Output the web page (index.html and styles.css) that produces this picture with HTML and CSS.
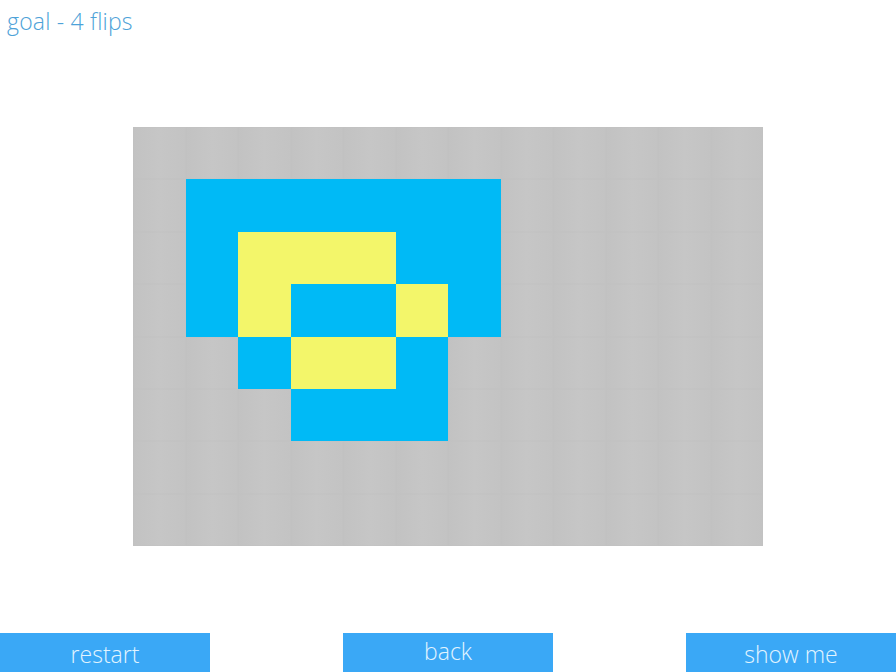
FILE: index.html
```html
<!DOCTYPE html>
<html>
<head>
<meta charset="utf-8">
<link rel="stylesheet" href="styles.css">
</head>
<body>
<div class="page">
  <div class="title">goal - 4 flips</div>
  <div class="board-wrap">
    <div class="board">
      <div class="c g"></div><div class="c g"></div><div class="c g"></div><div class="c g"></div><div class="c g"></div><div class="c g"></div><div class="c g"></div><div class="c g"></div><div class="c g"></div><div class="c g"></div><div class="c g"></div><div class="c g"></div>
      <div class="c g"></div><div class="c b"></div><div class="c b"></div><div class="c b"></div><div class="c b"></div><div class="c b"></div><div class="c b"></div><div class="c g"></div><div class="c g"></div><div class="c g"></div><div class="c g"></div><div class="c g"></div>
      <div class="c g"></div><div class="c b"></div><div class="c y"></div><div class="c y"></div><div class="c y"></div><div class="c b"></div><div class="c b"></div><div class="c g"></div><div class="c g"></div><div class="c g"></div><div class="c g"></div><div class="c g"></div>
      <div class="c g"></div><div class="c b"></div><div class="c y"></div><div class="c b"></div><div class="c b"></div><div class="c y"></div><div class="c b"></div><div class="c g"></div><div class="c g"></div><div class="c g"></div><div class="c g"></div><div class="c g"></div>
      <div class="c g"></div><div class="c g"></div><div class="c b"></div><div class="c y"></div><div class="c y"></div><div class="c b"></div><div class="c g"></div><div class="c g"></div><div class="c g"></div><div class="c g"></div><div class="c g"></div><div class="c g"></div>
      <div class="c g"></div><div class="c g"></div><div class="c g"></div><div class="c b"></div><div class="c b"></div><div class="c b"></div><div class="c g"></div><div class="c g"></div><div class="c g"></div><div class="c g"></div><div class="c g"></div><div class="c g"></div>
      <div class="c g"></div><div class="c g"></div><div class="c g"></div><div class="c g"></div><div class="c g"></div><div class="c g"></div><div class="c g"></div><div class="c g"></div><div class="c g"></div><div class="c g"></div><div class="c g"></div><div class="c g"></div>
      <div class="c g"></div><div class="c g"></div><div class="c g"></div><div class="c g"></div><div class="c g"></div><div class="c g"></div><div class="c g"></div><div class="c g"></div><div class="c g"></div><div class="c g"></div><div class="c g"></div><div class="c g"></div>
    </div>
  </div>
  <div class="buttons">
    <div class="btn restart">restart</div>
    <div class="btn back">back</div>
    <div class="btn show">show me</div>
  </div>
</div>
</body>
</html>
```
FILE: styles.css
```css
html, body {
  margin: 0;
  padding: 0;
  background: #ffffff;
}
.page {
  width: 896px;
  height: 672px;
  display: flex;
  flex-direction: column;
  font-family: "Open Sans", "DejaVu Sans", sans-serif;
}
.title {
  color: #4da2d8;
  font-size: 23px;
  font-weight: 300;
  line-height: 30px;
  padding: 6px 0 0 7px;
  height: 36px;
  box-sizing: border-box;
  letter-spacing: 0.2px;
}
.board-wrap {
  display: flex;
  justify-content: center;
  padding-top: 91px;
}
.board {
  display: grid;
  grid-template-columns: repeat(12, 52.5px);
  grid-template-rows: repeat(8, 52.4px);
  width: 630px;
}
.c {
  box-sizing: border-box;
}
.g {
  background: linear-gradient(to right, #c2c2c2, #c6c6c6 50%, #c3c3c3);
  box-shadow: inset 0 0 0 1px rgba(185,185,185,0.15);
}
.b {
  background: #00baf6;
}
.y {
  background: #f3f66a;
}
.buttons {
  margin-top: auto;
  display: flex;
  justify-content: space-between;
  height: 39px;
}
.btn {
  width: 210px;
  height: 39px;
  background: #3aa8f6;
  color: #e2f4ff;
  font-size: 23px;
  font-weight: 300;
  text-align: center;
  line-height: 42px;
}
.back {
  line-height: 36px;
}
```
